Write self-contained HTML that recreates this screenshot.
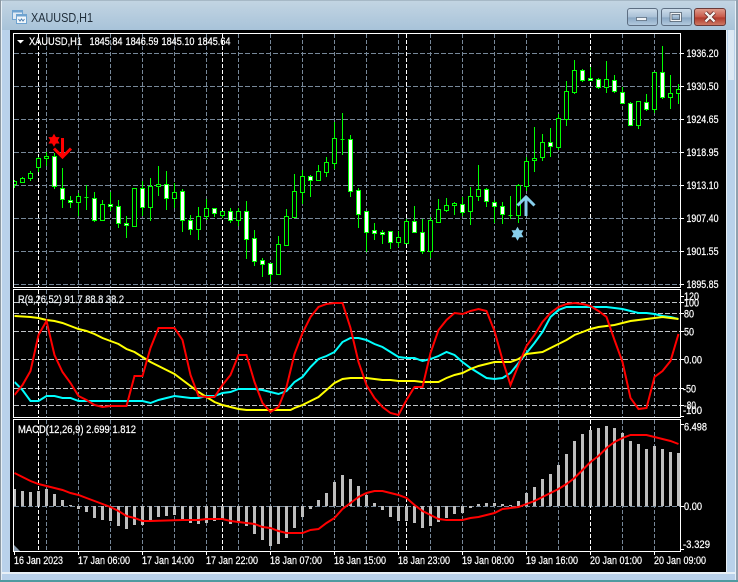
<!DOCTYPE html>
<html><head><meta charset="utf-8"><title>XAUUSD,H1</title>
<style>
html,body{margin:0;padding:0;background:#b9d1ea}
svg{display:block;position:absolute;left:0;top:0}
text{font-family:"Liberation Sans",sans-serif;font-size:11px;fill:#fff;stroke:#fff;stroke-width:.22px}
</style></head><body>
<svg width="738" height="582" viewBox="0 0 738 582" xmlns="http://www.w3.org/2000/svg">
<defs>
<linearGradient id="tb" x1="0" y1="0" x2="0" y2="1"><stop offset="0" stop-color="#c3d5e3"/><stop offset="1" stop-color="#a8c3d9"/></linearGradient>
<linearGradient id="bb" x1="0" y1="0" x2="0" y2="1"><stop offset="0" stop-color="#cfdeeb"/><stop offset=".5" stop-color="#a9c0d6"/><stop offset=".55" stop-color="#8ba8c4"/><stop offset="1" stop-color="#b4cbe0"/></linearGradient>
<linearGradient id="rb" x1="0" y1="0" x2="0" y2="1"><stop offset="0" stop-color="#e0a090"/><stop offset=".5" stop-color="#c8594a"/><stop offset=".55" stop-color="#b03a2c"/><stop offset="1" stop-color="#cf7c68"/></linearGradient>
<clipPath id="p1"><rect x="14" y="34" width="667" height="253"/></clipPath>
<clipPath id="p2"><rect x="14" y="290" width="667" height="127"/></clipPath>
<clipPath id="p3"><rect x="14" y="420" width="667" height="131"/></clipPath>
</defs>

<!-- window frame -->
<rect width="738" height="582" fill="#b9d1ea"/>
<rect width="738" height="30" fill="url(#tb)"/>
<rect x="0" y="0" width="738" height="1" fill="#a6b8c6"/>
<rect x="0" y="0" width="1" height="582" fill="#8c98a2"/>
<rect x="1" y="1" width="1" height="580" fill="#e6eff6"/>
<rect x="736" y="0" width="2" height="582" fill="#8fa0ae"/>
<rect x="735" y="1" width="1" height="580" fill="#e6eff6"/>
<rect x="0" y="580" width="738" height="2" fill="#4f9aa0"/>
<rect x="2" y="572" width="733" height="2" fill="#e8f0f6"/>
<rect x="726" y="30" width="1" height="544" fill="#e8f0f6"/>
<rect x="728" y="30" width="6" height="50" fill="#dce8f3"/>

<!-- title icon -->
<rect x="12.5" y="10.5" width="10" height="9" fill="#dfeaf4" stroke="#6fa3d0"/>
<rect x="12.5" y="10.5" width="10" height="2" fill="#6fa3d0"/>
<rect x="16.5" y="14.5" width="10" height="9" fill="#f2f7fb" stroke="#6fa3d0"/>
<rect x="16.5" y="14.5" width="10" height="2" fill="#6fa3d0"/>
<path d="M18.5 19l1.5 2 1.5-2 1.5 2 1.5-2" fill="none" stroke="#5080b0"/>
<text x="31" y="22" textLength="62" lengthAdjust="spacingAndGlyphs" style="font-size:12.5px;fill:#1f2d3a;stroke:none">XAUUSD,H1</text>

<!-- buttons -->
<rect x="627.5" y="8.5" width="30" height="17" rx="2.5" fill="url(#bb)" stroke="#5d6e82"/>
<rect x="636.5" y="17.5" width="10" height="3" fill="#f0f3f6" stroke="#4e5f72" stroke-width=".7"/>
<rect x="661.5" y="8.5" width="30" height="17" rx="2.5" fill="url(#bb)" stroke="#5d6e82"/>
<rect x="671" y="13.5" width="9.5" height="7" fill="none" stroke="#43515f" stroke-width="2.6"/>
<rect x="671" y="13.5" width="9.5" height="7" fill="none" stroke="#f2f4f6" stroke-width="1.2"/>
<rect x="694.5" y="8.5" width="31" height="17" rx="2.5" fill="url(#rb)" stroke="#6a3a38"/>
<path d="M705.5 12.5l9 9m0-9l-9 9" stroke="#5b2320" stroke-width="4" fill="none"/>
<path d="M705.5 12.5l9 9m0-9l-9 9" stroke="#f4f2f0" stroke-width="2.4" fill="none"/>

<!-- chart background -->
<rect x="10" y="30" width="716" height="542" fill="#000"/>

<!-- grid -->
<g fill="none" stroke="#778899" shape-rendering="crispEdges">
<path stroke-dasharray="5 2" d="M14 53.5H680M14 86.5H680M14 119.5H680M14 152.5H680M14 185.5H680M14 218.5H680M14 251.5H680M14 284.5H680"/>
<path stroke-dasharray="5 2" d="M14 506.5H680"/>
<path stroke-dasharray="4 2" d="M46.5 34V287M78.5 34V287M110.5 34V287M142.5 34V287M174.5 34V287M206.5 34V287M238.5 34V287M270.5 34V287M302.5 34V287M334.5 34V287M366.5 34V287M398.5 34V287M430.5 34V287M462.5 34V287M494.5 34V287M526.5 34V287M558.5 34V287M622.5 34V287M654.5 34V287"/>
<path stroke-dasharray="4 2" d="M46.5 290V417M78.5 290V417M110.5 290V417M142.5 290V417M174.5 290V417M206.5 290V417M238.5 290V417M270.5 290V417M302.5 290V417M334.5 290V417M366.5 290V417M398.5 290V417M430.5 290V417M462.5 290V417M494.5 290V417M526.5 290V417M558.5 290V417M622.5 290V417M654.5 290V417"/>
<path stroke-dasharray="4 2" d="M46.5 420V551M78.5 420V551M110.5 420V551M142.5 420V551M174.5 420V551M206.5 420V551M238.5 420V551M270.5 420V551M302.5 420V551M334.5 420V551M366.5 420V551M398.5 420V551M430.5 420V551M462.5 420V551M494.5 420V551M526.5 420V551M558.5 420V551M622.5 420V551M654.5 420V551"/>
<path stroke="#c0c4c8" stroke-dasharray="5 2" d="M14 302.5H680M14 313.5H680M14 331.5H680M14 359.5H680M14 388.5H680M14 405.5H680"/>
<path stroke="#fff" stroke-dasharray="4 2" d="M38.5 34V287M222.5 34V287M406.5 34V287M590.5 34V287M38.5 290V417M222.5 290V417M406.5 290V417M590.5 290V417M38.5 420V551M222.5 420V551M406.5 420V551M590.5 420V551"/>
</g>

<!-- candles -->
<g clip-path="url(#p1)" fill="none" stroke="#00ff00" shape-rendering="crispEdges">
<path d="M14.5 180V188M22.5 177V183M30.5 171V181M38.5 157V172M46.5 152V166M54.5 153V189M62.5 168V208M70.5 196V208M78.5 193V216M86.5 185V210M94.5 192V222M102.5 200V221M110.5 192V211M118.5 200V228M126.5 216V238M134.5 188V227M142.5 181V216M150.5 178V221M158.5 166V196M166.5 171V210M174.5 183V208M182.5 189V232M190.5 215V235M198.5 207V240M206.5 199V220M214.5 208V217M222.5 211V218M230.5 208V223M238.5 208V226M246.5 201V259M254.5 230V266M262.5 258V277M270.5 263V282M278.5 236V274M286.5 209V245M294.5 174V217M302.5 170V204M310.5 175V197M318.5 165V181M326.5 157V177M334.5 122V169M342.5 113V155M350.5 135V197M358.5 188V228M366.5 211V252M374.5 223V240M382.5 230V244M390.5 231V249M398.5 231V247M406.5 219V243M414.5 206V233M422.5 219V254M430.5 217V258M438.5 199V223M446.5 198V212M454.5 202V215M462.5 197V216M470.5 187V225M478.5 165V201M486.5 188V207M494.5 200V223M502.5 202V224M510.5 196V219M518.5 184V223M526.5 157V191M534.5 127V172M542.5 134V161M550.5 128V157M558.5 114V150M566.5 81V126M574.5 60V94M582.5 69V82M590.5 67V81M598.5 78V89M606.5 61V93M614.5 75V93M622.5 87V103M630.5 102V125M638.5 101V129M646.5 94V111M654.5 72V113M662.5 46V99M670.5 75V109M678.5 84V104"/>
<path fill="#000" d="M12.5 181.5h4v3h-4zM20.5 178.5h4v4h-4zM28.5 173.5h4v5h-4zM36.5 158.5h4v9h-4zM44.5 156.5h4v2h-4zM76.5 196.5h4v6h-4zM84.5 197.5h4v0h-4zM100.5 204.5h4v16h-4zM132.5 188.5h4v38h-4zM148.5 186.5h4v21h-4zM156.5 184.5h4v2h-4zM172.5 192.5h4v6h-4zM196.5 216.5h4v13h-4zM204.5 208.5h4v8h-4zM220.5 211.5h4v4h-4zM236.5 211.5h4v9h-4zM276.5 244.5h4v30h-4zM284.5 216.5h4v29h-4zM292.5 191.5h4v26h-4zM300.5 176.5h4v16h-4zM316.5 171.5h4v9h-4zM324.5 162.5h4v10h-4zM332.5 138.5h4v25h-4zM340.5 139.5h4v0h-4zM396.5 237.5h4v5h-4zM404.5 221.5h4v22h-4zM428.5 220.5h4v31h-4zM436.5 209.5h4v13h-4zM444.5 205.5h4v5h-4zM452.5 203.5h4v2h-4zM468.5 196.5h4v15h-4zM476.5 189.5h4v7h-4zM508.5 215.5h4v0h-4zM516.5 185.5h4v30h-4zM524.5 161.5h4v25h-4zM532.5 158.5h4v2h-4zM540.5 142.5h4v15h-4zM556.5 118.5h4v29h-4zM564.5 91.5h4v28h-4zM572.5 70.5h4v22h-4zM604.5 79.5h4v8h-4zM636.5 101.5h4v24h-4zM652.5 72.5h4v37h-4zM668.5 93.5h4v4h-4zM676.5 89.5h4v4h-4z"/>
<path fill="#fff" d="M52.5 156.5h4v30h-4zM60.5 188.5h4v11h-4zM68.5 200.5h4v2h-4zM92.5 198.5h4v22h-4zM108.5 204.5h4v2h-4zM116.5 206.5h4v17h-4zM124.5 223.5h4v2h-4zM140.5 188.5h4v19h-4zM164.5 184.5h4v14h-4zM180.5 191.5h4v29h-4zM188.5 220.5h4v9h-4zM212.5 208.5h4v5h-4zM228.5 211.5h4v9h-4zM244.5 211.5h4v28h-4zM252.5 238.5h4v23h-4zM260.5 260.5h4v4h-4zM268.5 263.5h4v11h-4zM308.5 176.5h4v4h-4zM348.5 139.5h4v52h-4zM356.5 190.5h4v24h-4zM364.5 211.5h4v21h-4zM372.5 230.5h4v3h-4zM380.5 232.5h4v2h-4zM388.5 231.5h4v11h-4zM412.5 221.5h4v11h-4zM420.5 232.5h4v19h-4zM460.5 204.5h4v8h-4zM484.5 189.5h4v12h-4zM492.5 202.5h4v4h-4zM500.5 206.5h4v8h-4zM548.5 142.5h4v4h-4zM580.5 70.5h4v10h-4zM588.5 78.5h4v2h-4zM596.5 79.5h4v8h-4zM612.5 80.5h4v11h-4zM620.5 92.5h4v11h-4zM628.5 103.5h4v22h-4zM644.5 102.5h4v7h-4zM660.5 72.5h4v25h-4z"/>
</g>

<!-- signal markers -->
<polygon fill="#ff0000" points="54,133.8 59.6,143.5 48.4,143.5"/>
<polygon fill="#ff0000" points="54,146.8 59.6,137.1 48.4,137.1"/>
<g fill="none" stroke="#ff0000" stroke-width="3"><path d="M62.5 138V157M54 148.5l8.5 8.5 8.5-8.5"/></g>
<polygon fill="#87ceeb" points="517.5,226.7 523.5,237.2 511.5,237.2"/>
<polygon fill="#87ceeb" points="517.5,240.7 523.5,230.2 511.5,230.2"/>
<g fill="none" stroke="#87ceeb" stroke-width="3"><path d="M526 216V197M517.5 205.5l8.5-8.5 8.5 8.5"/></g>

<!-- indicator 1 -->
<g clip-path="url(#p2)" fill="none" stroke-width="2" stroke-linejoin="miter" transform="translate(.5 0)">
<polyline stroke="#00ffff" points="14,382 22,390 30,401 38,401 46,396 54,396 62,398 70,398 78,401 86,401 94,401 102,401 110,401 118,401 126,401 134,401 142,401 150,403 158,400 166,398 174,396 182,397 190,398 198,398 206,396 214,396 222,393 230,392 238,389 246,389 254,389 262,390 270,392 278,394 286,391 294,382 302,377 310,367 318,359 326,356 334,352 342,342 350,338 358,338 366,340 374,344 382,347 390,352 398,357 406,358 414,358 422,361 430,359 438,356 446,352 454,355 462,362 470,368 478,373 486,378 494,379 502,378 510,373 518,363 526,353 534,343 542,332 550,317 558,310 566,307 574,307 582,307 590,307 598,307 606,307 614,308 622,309 630,311 638,313 646,313 654,314 662,316 670,317 678,319"/>
<polyline stroke="#ffff00" points="14,316 30,317 38,318 46,320 54,321 62,323 70,326 78,329 86,331 94,334 102,338 110,341 118,344 126,349 134,352 142,357 150,362 158,366 166,370 174,374 182,380 190,386 198,392 206,397 214,402 222,405 230,407 238,409 246,410 290,410 294,408 302,405 310,401 318,397 326,390 334,383 342,379 350,378 358,378 366,378 374,379 382,380 390,380 398,381 414,381 422,382 438,382 446,378 454,375 462,373 470,369 478,366 486,364 494,362 502,362 510,362 518,359 526,354 534,353 542,352 550,348 558,344 566,340 574,335 582,332 590,329 598,327 606,326 614,325 622,323 630,321 638,320 646,319 654,318 662,317 670,318 678,319"/>
<polyline stroke="#ff0000" points="14,395 22,385 30,371 38,335 46,321 54,355 62,372 70,383 78,396 86,400 94,405 102,407 110,406 118,406 126,406 134,376 142,376 150,348 158,328 166,328 174,328 182,340 190,375 198,396 206,397 214,397 222,385 230,375 238,355 246,355 254,382 262,403 270,412 278,407 286,387 294,354 302,333 310,317 318,307 326,304 334,303 342,303 350,328 358,362 366,385 374,398 382,407 390,413 398,415 406,400 414,387 422,387 430,353 438,330 446,320 454,313 462,314 470,311 478,309 486,311 494,331 502,360 510,385 518,365 526,346 534,335 542,322 550,313 558,307 566,304 574,303 582,304 590,306 598,311 606,317 614,340 622,362 630,398 638,409 646,408 654,377 662,371 670,361 678,334"/>
</g>

<!-- MACD -->
<g clip-path="url(#p3)">
<path fill="none" stroke="#bebebe" stroke-width="3" shape-rendering="crispEdges" d="M14.5 506V489M22.5 506V491M30.5 506V492M38.5 506V491M46.5 506V489M54.5 506V494M62.5 506V500M70.5 506V505M78.5 506V509M86.5 506V512M94.5 506V518M102.5 506V520M110.5 506V521M118.5 506V526M126.5 506V529M134.5 506V525M142.5 506V525M150.5 506V521M158.5 506V517M166.5 506V516M174.5 506V515M182.5 506V520M190.5 506V523M198.5 506V524M206.5 506V523M214.5 506V521M222.5 506V520M230.5 506V524M238.5 506V523M246.5 506V526M254.5 506V534M262.5 506V540M270.5 506V546M278.5 506V544M286.5 506V538M294.5 506V528M302.5 506V517M310.5 506V509M318.5 506V500M326.5 506V493M334.5 506V482M342.5 506V475M350.5 506V479M358.5 506V486M366.5 506V495M374.5 506V503M382.5 506V510M390.5 506V517M398.5 506V521M406.5 506V521M414.5 506V523M422.5 506V528M430.5 506V526M438.5 506V522M446.5 506V518M454.5 506V514M462.5 506V513M470.5 506V508M478.5 506V504M486.5 506V503M494.5 506V503M502.5 506V504M510.5 506V505M518.5 506V501M526.5 506V493M534.5 506V487M542.5 506V479M550.5 506V474M558.5 506V465M566.5 506V454M574.5 506V441M582.5 506V434M590.5 506V430M598.5 506V428M606.5 506V426M614.5 506V428M622.5 506V433M630.5 506V441M638.5 506V444M646.5 506V449M654.5 506V446M662.5 506V449M670.5 506V452M678.5 506V453"/>
<polyline transform="translate(.5 0)" fill="none" stroke="#ff0000" stroke-width="2" points="14,473 22,477 30,481 38,484 46,486 54,488 62,490 70,493 78,495 86,498 94,501 102,504 110,507 118,511 126,516 134,518 142,521 150,521 182,520 190,520 198,520 206,519 214,519 222,519 230,521 238,522 246,523 254,524 262,527 270,528 278,531 286,533 294,533 302,533 310,530 318,529 326,523 334,518 342,509 350,503 358,497 366,493 374,491 382,491 390,493 398,495 406,498 414,505 422,511 430,515 438,519 446,520 454,520 462,520 470,518 478,517 486,515 494,513 502,509 510,508 518,507 526,504 534,501 542,497 550,493 558,489 566,484 574,478 582,470 590,462 598,456 606,448 614,442 622,438 630,435 638,435 646,435 654,437 662,439 670,441 678,444"/>
<path d="M14 545l6 6h-6z" fill="#8899aa"/>
</g>

<!-- pane borders and ticks -->
<g fill="none" stroke="#fff" shape-rendering="crispEdges">
<rect x="13.5" y="33.5" width="667" height="254"/>
<rect x="13.5" y="289.5" width="667" height="128"/>
<rect x="13.5" y="419.5" width="667" height="132"/>
<path d="M681 53.5h3M681 86.5h3M681 119.5h3M681 152.5h3M681 185.5h3M681 218.5h3M681 251.5h3M681 284.5h3M681 296.5h3M681 302.5h3M681 313.5h3M681 331.5h3M681 359.5h3M681 388.5h3M681 405.5h3M681 416.5h3M681 424.5h3M681 506.5h3M681 549.5h3"/>
<path d="M14.5 552v3M78.5 552v3M142.5 552v3M206.5 552v3M270.5 552v3M334.5 552v3M398.5 552v3M462.5 552v3M526.5 552v3M590.5 552v3M654.5 552v3"/>
</g>

<!-- chart labels -->
<path d="M17 40h7l-3.5 3.5z" fill="#fff"/>
<text x="29" y="45" textLength="53" lengthAdjust="spacingAndGlyphs">XAUUSD,H1</text>
<text x="89.5" y="45" textLength="33" lengthAdjust="spacingAndGlyphs">1845.84</text>
<text x="125.5" y="45" textLength="33" lengthAdjust="spacingAndGlyphs">1846.59</text>
<text x="161.5" y="45" textLength="33" lengthAdjust="spacingAndGlyphs">1845.10</text>
<text x="197.5" y="45" textLength="33" lengthAdjust="spacingAndGlyphs">1845.64</text>
<text x="18" y="303" textLength="106" lengthAdjust="spacingAndGlyphs" style="fill:#dfe6ee">R(9,26,52) 91.7 88.8 38.2</text>
<text x="18" y="433" textLength="118" lengthAdjust="spacingAndGlyphs">MACD(12,26,9) 2.699 1.812</text>

<text x="686.5" y="57" textLength="32" lengthAdjust="spacingAndGlyphs">1936.20</text>
<text x="686.5" y="90" textLength="32" lengthAdjust="spacingAndGlyphs">1930.50</text>
<text x="686.5" y="123" textLength="32" lengthAdjust="spacingAndGlyphs">1924.65</text>
<text x="686.5" y="156" textLength="32" lengthAdjust="spacingAndGlyphs">1918.95</text>
<text x="686.5" y="189" textLength="32" lengthAdjust="spacingAndGlyphs">1913.10</text>
<text x="686.5" y="222" textLength="32" lengthAdjust="spacingAndGlyphs">1907.40</text>
<text x="686.5" y="255" textLength="32" lengthAdjust="spacingAndGlyphs">1901.55</text>
<text x="686.5" y="288" textLength="32" lengthAdjust="spacingAndGlyphs">1895.85</text>

<text x="684" y="300" textLength="15" lengthAdjust="spacingAndGlyphs">120</text>
<text x="684" y="306.5" textLength="15" lengthAdjust="spacingAndGlyphs">100</text>
<text x="684" y="317.5" textLength="10" lengthAdjust="spacingAndGlyphs">80</text>
<text x="684" y="335.5" textLength="10" lengthAdjust="spacingAndGlyphs">50</text>
<text x="684" y="363.5" textLength="18" lengthAdjust="spacingAndGlyphs">0.00</text>
<text x="683" y="392.5" textLength="13" lengthAdjust="spacingAndGlyphs">-50</text>
<text x="684" y="409" textLength="12" lengthAdjust="spacingAndGlyphs">-80</text>
<text x="683" y="414" textLength="19" lengthAdjust="spacingAndGlyphs">-100</text>

<text x="684" y="430.5" textLength="23" lengthAdjust="spacingAndGlyphs">6.498</text>
<text x="684" y="510" textLength="18" lengthAdjust="spacingAndGlyphs">0.00</text>
<text x="683" y="548" textLength="27" lengthAdjust="spacingAndGlyphs">-3.329</text>

<text x="14" y="564" textLength="49" lengthAdjust="spacingAndGlyphs">16 Jan 2023</text>
<text x="78" y="564" textLength="52" lengthAdjust="spacingAndGlyphs">17 Jan 06:00</text>
<text x="142" y="564" textLength="52" lengthAdjust="spacingAndGlyphs">17 Jan 14:00</text>
<text x="206" y="564" textLength="52" lengthAdjust="spacingAndGlyphs">17 Jan 22:00</text>
<text x="270" y="564" textLength="52" lengthAdjust="spacingAndGlyphs">18 Jan 07:00</text>
<text x="334" y="564" textLength="52" lengthAdjust="spacingAndGlyphs">18 Jan 15:00</text>
<text x="398" y="564" textLength="52" lengthAdjust="spacingAndGlyphs">18 Jan 23:00</text>
<text x="462" y="564" textLength="52" lengthAdjust="spacingAndGlyphs">19 Jan 08:00</text>
<text x="526" y="564" textLength="52" lengthAdjust="spacingAndGlyphs">19 Jan 16:00</text>
<text x="590" y="564" textLength="52" lengthAdjust="spacingAndGlyphs">20 Jan 01:00</text>
<text x="654" y="564" textLength="52" lengthAdjust="spacingAndGlyphs">20 Jan 09:00</text>
</svg>
</body></html>
